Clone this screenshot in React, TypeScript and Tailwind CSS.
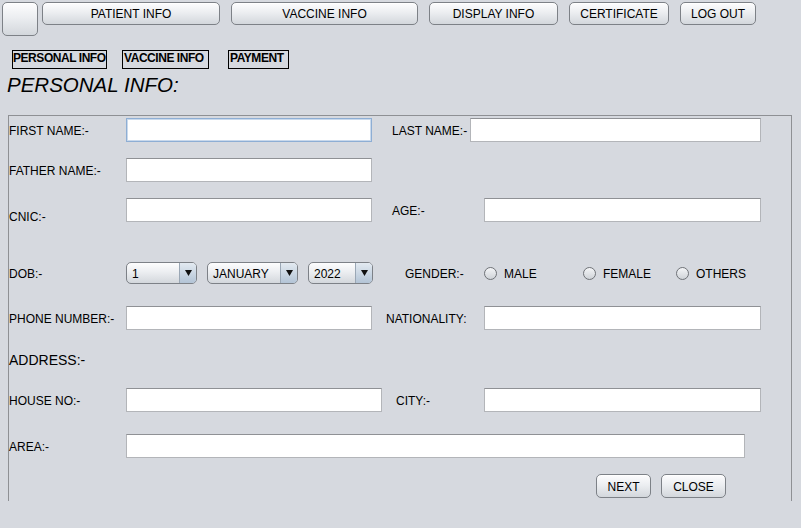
import React from 'react'

const font = "font-['Liberation_Sans',Arial,sans-serif]"
const btn =
  'flex items-center justify-center rounded-[5px] border border-[#7d8187] bg-[linear-gradient(to_bottom,#fdfdfe,#eceef1_45%,#d3d7dc)] pt-[1px] text-[12px] text-black shadow-[inset_0_1px_0_#ffffff]'

function Field({ w, focus = false }: { w: number; focus?: boolean }) {
  return (
    <div
      style={{ width: w }}
      className={
        focus
          ? 'h-[24px] shrink-0 border border-[#8eaed4] bg-white shadow-[inset_0_0_0_1px_#c9d9ec]'
          : 'h-[24px] shrink-0 border border-[#b3b5b9] border-t-[#8f9195] bg-white'
      }
    />
  )
}

function Label({ w, children, className = '' }: { w: number; children: React.ReactNode; className?: string }) {
  return (
    <div style={{ width: w }} className={`shrink-0 pt-[1px] text-[12px] text-black whitespace-nowrap ${className}`}>
      {children}
    </div>
  )
}

function Combo({ w, value }: { w: number; value: string }) {
  return (
    <div
      style={{ width: w }}
      className="flex h-[22px] shrink-0 overflow-hidden rounded-[5px] border border-[#7d8187] bg-[linear-gradient(to_bottom,#fdfdfe,#eceef1_45%,#d3d7dc)]"
    >
      <div className="flex flex-1 items-center pl-[5px] pt-[1px] text-[12px] text-black">{value}</div>
      <div className="flex w-[17px] items-center justify-center border-l border-[#9aa7b5] bg-[linear-gradient(to_bottom,#e3eaf1,#b3c4d6)]">
        <svg width="7" height="6" viewBox="0 0 7 6">
          <path d="M0 0h7L3.5 6z" fill="#111" />
        </svg>
      </div>
    </div>
  )
}

function Radio({ label, w }: { label: string; w: number }) {
  return (
    <div style={{ width: w }} className="flex shrink-0 items-center">
      <div className="h-[13px] w-[13px] rounded-full border border-[#6f7277] bg-[linear-gradient(to_bottom,#f4f5f7,#cfd3d8)]" />
      <span className="ml-[7px] pt-[1px] text-[12px] text-black">{label}</span>
    </div>
  )
}

export default function App() {
  return (
    <div className={`h-[528px] w-[801px] overflow-hidden bg-[#d6d9df] ${font}`}>
      {/* top button bar */}
      <div className="flex items-start pl-[2px] pt-[2px]">
        <div className={`${btn} h-[34px] w-[36px]`} />
        <div className={`${btn} ml-[4px] h-[23px] w-[178px]`}>PATIENT INFO</div>
        <div className={`${btn} ml-[11px] h-[23px] w-[187px]`}>VACCINE INFO</div>
        <div className={`${btn} ml-[11px] h-[23px] w-[129px]`}>DISPLAY INFO</div>
        <div className={`${btn} ml-[11px] h-[23px] w-[100px]`}>CERTIFICATE</div>
        <div className={`${btn} ml-[11px] h-[23px] w-[76px]`}>LOG OUT</div>
      </div>

      {/* sub tabs */}
      <div className="mt-[14px] flex pl-[12px] text-[12px] font-bold tracking-[-0.45px] text-black">
        <div className="h-[19px] w-[95px] whitespace-nowrap border border-black leading-[15px]">PERSONAL INFO</div>
        <div className="ml-[15px] h-[19px] w-[87px] whitespace-nowrap border border-black pl-[1px] leading-[15px]">VACCINE INFO</div>
        <div className="ml-[19px] h-[19px] w-[61px] whitespace-nowrap border border-black pl-[1px] leading-[15px]">PAYMENT</div>
      </div>

      <div className="mt-[3px] pl-[7px] text-[20.5px] italic leading-[26px] text-black">PERSONAL INFO:</div>

      {/* form panel */}
      <div className="ml-[8px] mt-[17px] h-[386px] w-[784px] border border-b-0 border-[#8e9094]">
        <div className="mt-[2px] flex h-[24px] items-center">
          <Label w={117}>FIRST NAME:-</Label>
          <Field w={246} focus />
          <Label w={78} className="ml-[20px]">LAST NAME:-</Label>
          <Field w={291} />
        </div>

        <div className="mt-[16px] flex h-[24px] items-center">
          <Label w={117}>FATHER NAME:-</Label>
          <Field w={246} />
        </div>

        <div className="mt-[16px] flex h-[24px] items-center">
          <Label w={117} className="translate-y-[6px]">CNIC:-</Label>
          <Field w={246} />
          <Label w={92} className="ml-[20px]">AGE:-</Label>
          <Field w={277} />
        </div>

        <div className="mt-[40px] flex h-[22px] items-center">
          <Label w={117}>DOB:-</Label>
          <Combo w={71} value="1" />
          <div className="ml-[10px]">
            <Combo w={91} value="JANUARY" />
          </div>
          <div className="ml-[10px]">
            <Combo w={65} value="2022" />
          </div>
          <Label w={79} className="ml-[32px]">GENDER:-</Label>
          <Radio label="MALE" w={99} />
          <Radio label="FEMALE" w={93} />
          <Radio label="OTHERS" w={80} />
        </div>

        <div className="mt-[22px] flex h-[24px] items-center">
          <Label w={117}>PHONE NUMBER:-</Label>
          <Field w={246} />
          <Label w={98} className="ml-[14px]">NATIONALITY:</Label>
          <Field w={277} />
        </div>

        <div className="mt-[20px] flex h-[20px] items-center">
          <Label w={117} className="text-[14px]">ADDRESS:-</Label>
        </div>

        <div className="mt-[18px] flex h-[24px] items-center">
          <Label w={117}>HOUSE NO:-</Label>
          <Field w={256} />
          <Label w={88} className="ml-[14px]">CITY:-</Label>
          <Field w={277} />
        </div>

        <div className="mt-[22px] flex h-[24px] items-center">
          <Label w={117}>AREA:-</Label>
          <Field w={619} />
        </div>

        <div className="mt-[16px] flex h-[24px] items-center pl-[587px]">
          <div className={`${btn} h-[24px] w-[55px]`}>NEXT</div>
          <div className={`${btn} ml-[10px] h-[24px] w-[65px]`}>CLOSE</div>
        </div>
      </div>
    </div>
  )
}
